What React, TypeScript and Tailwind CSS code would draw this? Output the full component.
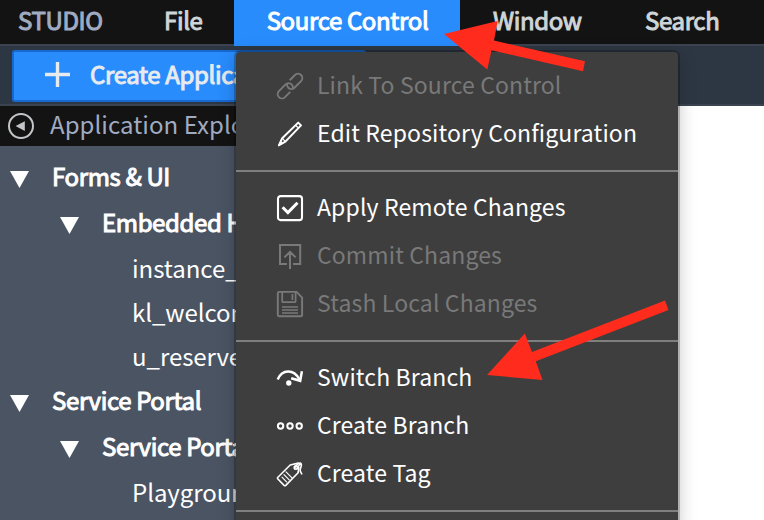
import type { ReactNode } from 'react';

const faux = '[-webkit-text-stroke:1px_currentColor] tracking-[-0.36px]';

function LinkIcon() {
  return (
    <svg width="28" height="28" viewBox="0 0 28 28" fill="none" stroke="currentColor" strokeWidth="1.9" strokeDasharray="40.8 5" strokeDashoffset="-2">
      <rect x="-9" y="-4.3" width="18" height="8.6" rx="4.3" transform="translate(18.7 9.4) rotate(-45)" />
      <rect x="-9" y="-4.3" width="18" height="8.6" rx="4.3" transform="translate(9.3 18.8) rotate(135)" />
    </svg>
  );
}
function PencilIcon() {
  return (
    <svg width="28" height="28" viewBox="0 0 28 28" fill="none" stroke="currentColor" strokeWidth="2" strokeLinejoin="round">
      <path d="M3 25.2 6.2 18.2 22.2 2.6l2.8 2.8L9.4 21.6Z" />
      <path d="m6.2 18.2 3.2 3.4M19.3 5l3.2 3.2" strokeWidth="1.2" />
      <path d="m1.8 26.4 2.6-6 3.2 3.1Z" fill="currentColor" stroke="none" />
    </svg>
  );
}
function CheckIcon() {
  return (
    <svg width="28" height="28" viewBox="0 0 28 28" fill="none" stroke="currentColor">
      <rect x="2" y="2.1" width="24" height="24" rx="2.6" strokeWidth="2.1" />
      <path d="m6.6 13.2 5.3 5.4 9.6-9.8" strokeWidth="3" />
    </svg>
  );
}
function CommitIcon() {
  return (
    <svg width="28" height="28" viewBox="0 0 28 28" fill="none" stroke="currentColor" strokeWidth="2">
      <path d="M10.9 22.1H4V3h20.2v19.1h-7.2" />
      <path d="M14 27V10M8.4 15.4 14 9.8l5.6 5.6" />
    </svg>
  );
}
function DiskIcon() {
  return (
    <svg width="28" height="28" viewBox="0 0 28 28" fill="none" stroke="currentColor" strokeWidth="1.9">
      <path d="M2.8 1.9h17.7l5.6 5.7v17.3a1.3 1.3 0 0 1-1.3 1.3H3.1a1.3 1.3 0 0 1-1.3-1.3V3.1a1.3 1.3 0 0 1 1-1.2Z" />
      <path d="M6.2 2v9.2a1 1 0 0 0 1 1h11.4a1 1 0 0 0 1-1V2M16.4 4v6M6 17h16M6 20h16M6 23h16" strokeWidth="1.7" />
    </svg>
  );
}
function SwitchIcon() {
  return (
    <svg width="28" height="28" viewBox="0 0 28 28" fill="none" stroke="currentColor" strokeWidth="2.5">
      <path d="M1.7 15.4C6.2 5.4 17.5 4.6 23.4 15.4" />
      <path d="m15.2 14.2 9 2.6 1.7-9.6" />
      <circle cx="12.8" cy="19" r="2.7" fill="currentColor" stroke="none" />
    </svg>
  );
}
function DotsIcon() {
  return (
    <svg width="28" height="28" viewBox="0 0 28 28" fill="none" stroke="currentColor" strokeWidth="2">
      <circle cx="4.6" cy="14" r="2.7" />
      <circle cx="14" cy="14" r="2.7" />
      <circle cx="23.2" cy="14" r="2.7" />
    </svg>
  );
}
function TagIcon() {
  return (
    <svg width="28" height="28" viewBox="0 0 28 28" fill="none" stroke="currentColor" strokeWidth="1.6" strokeLinejoin="round" strokeLinecap="round">
      <path d="M22.3 11.9 21.9 13 9.8 25.4a1.3 1.3 0 0 1-1.7 0L1.9 19a1.3 1.3 0 0 1 0-1.8L14.2 5l8-1.9" />
      <path d="m22.8 7.4-.5 4.5" />
      <circle cx="19.9" cy="7.6" r="1.7" />
      <path d="M18.7 8.8c0-3 4.3-6.5 6.1-5.5 1.8 1.2-.5 4.4-.6 6.7-.1 1.5.8 2.3 1.5 3.8M20.9 8.4l3.5-4.8" />
      <path d="m10 11.8 6 6M8 14.6l5.2 5.2M6 17.2l4.5 4.6" strokeWidth="1.2" />
    </svg>
  );
}

function Entry({ icon, label, disabled }: { icon: ReactNode; label: string; disabled?: boolean }) {
  return (
    <li className={`flex h-12 items-center pl-10 ${disabled ? 'text-[#797979]' : 'text-white'}`}>
      <span className="w-7 shrink-0">{icon}</span>
      <span className="pb-1 pl-[13px] text-[23px] leading-8 tracking-[0.13px] whitespace-nowrap">{label}</span>
    </li>
  );
}

function Rule() {
  return <li className="my-3 h-0.5 bg-[#7f7f7f]" />;
}

function Header({ label, nested }: { label: string; nested?: boolean }) {
  return (
    <div className={`flex h-[46px] items-center text-white ${nested ? 'pl-[60px]' : 'pl-[10px]'}`}>
      <svg width="19" height="17" viewBox="0 0 19 17" className="mt-[3px]">
        <path d="M0 0h19L9.5 17Z" fill="currentColor" />
      </svg>
      <span className={`pb-1 pl-[23px] text-[24px] leading-8 whitespace-nowrap ${faux}`}>{label}</span>
    </div>
  );
}

function Leaf({ label }: { label: string }) {
  return <div className="h-11 pt-[4px] pl-[132px] text-[24px] leading-8 tracking-[-0.05px] whitespace-nowrap text-white">{label}</div>;
}

export default function App() {
  return (
    <div className="relative flex h-[520px] w-[764px] flex-col overflow-hidden bg-white font-['Noto_Sans_CJK_SC','Noto_Sans',sans-serif]">
      <header className="flex h-[46px] shrink-0 border-b-2 border-[#3a434f] bg-[#131313] text-[24px] leading-10 whitespace-nowrap text-[#ced5d8]">
        <div className={`w-[147px] pl-[18px] text-[#a0abc2] ${faux}`}>STUDIO</div>
        <div className={`w-[87px] pl-[17px] ${faux}`}>File</div>
        <div className={`h-[46px] w-[226px] bg-[#288cfd] pl-px text-center text-white ${faux}`}>Source Control</div>
        <div className={`w-[153px] pl-[33px] ${faux}`}>Window</div>
        <div className={`pl-[32px] ${faux}`}>Search</div>
      </header>
      <div className="h-[60px] shrink-0 border-b-2 border-[#3a434f] bg-[#2d3743] pt-1 pl-3">
        <button className="flex h-[52px] w-[354px] items-center rounded-[3px] border-2 border-[#1768cf] bg-[#288cfd] pl-[31px] text-[#e8ebee]">
          <svg width="25" height="25" viewBox="0 0 25 25" className="-mt-1" fill="none" stroke="currentColor" strokeWidth="3.4">
            <path d="M12.5 0v25M0 12.5h25" />
          </svg>
          <span className={`pb-1 pl-[20px] text-[24px] leading-8 whitespace-nowrap ${faux}`}>Create Application</span>
        </button>
      </div>
      <main className="flex flex-1">
        <aside className="w-[366px] bg-[#4a5463]">
          <div className="flex h-10 items-center bg-[#131313] pl-2 text-[#a0abc2]">
            <svg width="26" height="26" viewBox="0 0 26 26" fill="none" className="text-[#c3c6c8]">
              <circle cx="13" cy="13" r="12" stroke="currentColor" strokeWidth="2" />
              <path d="M7.6 13.1 16.8 8.2v9.8Z" fill="currentColor" />
            </svg>
            <span className="pb-1 pl-[16px] text-[24px] leading-8 tracking-[0.05px] whitespace-nowrap">Application Explorer</span>
          </div>
          <div className="pt-[9px]">
            <Header label="Forms & UI" />
            <Header label="Embedded Help" nested />
            <div className="mt-px -mb-px">
              <Leaf label="instance_" />
              <Leaf label="kl_welcome" />
              <Leaf label="u_reserve" />
            </div>
            <Header label="Service Portal" />
            <Header label="Service Portals" nested />
            <div className="pt-px">
              <Leaf label="Playground" />
            </div>
          </div>
        </aside>
      </main>
      <ul className="absolute top-[52px] left-[236px] h-[480px] w-[442px] rounded-t-[4px] bg-[#3e3e3e] pt-[10px] shadow-[0_0_0_2px_rgba(0,0,0,0.22),0_4px_18px_rgba(0,0,0,0.25)]">
        <Entry icon={<LinkIcon />} label="Link To Source Control" disabled />
        <Entry icon={<PencilIcon />} label="Edit Repository Configuration" />
        <Rule />
        <Entry icon={<CheckIcon />} label="Apply Remote Changes" />
        <Entry icon={<CommitIcon />} label="Commit Changes" disabled />
        <Entry icon={<DiskIcon />} label="Stash Local Changes" disabled />
        <Rule />
        <Entry icon={<SwitchIcon />} label="Switch Branch" />
        <Entry icon={<DotsIcon />} label="Create Branch" />
        <Entry icon={<TagIcon />} label="Create Tag" />
        <Rule />
      </ul>
      <svg className="pointer-events-none absolute inset-0" width="764" height="520" viewBox="0 0 764 520" fill="#ff2b1d">
        <path d="M444 34 497.7 21 494 40.5 585 61.3 583 71.2 491.5 50.2 487.3 69.5Z" />
        <path d="M487 375 524.8 333.6 532 352 665 300.5 668.5 310 535.8 361.3 542.5 380Z" />
      </svg>
    </div>
  );
}
